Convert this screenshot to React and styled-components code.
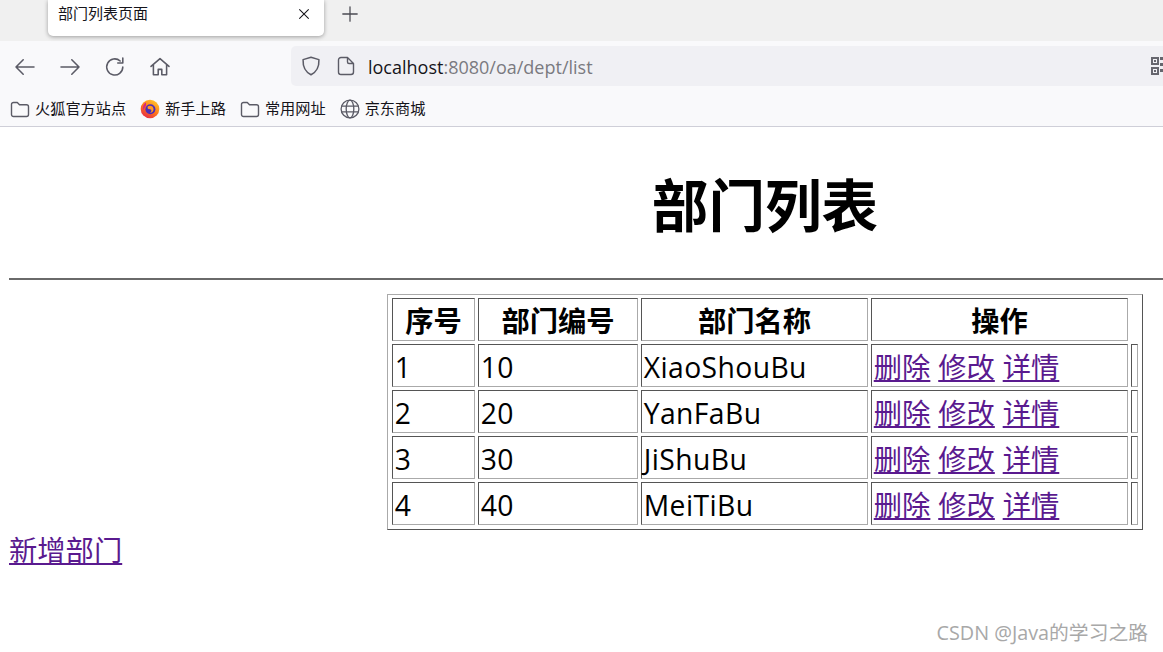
import React from "react";
import styled, { createGlobalStyle } from "styled-components";

const Global = createGlobalStyle`
  html, body { margin: 0; padding: 0; background: #fff; width: 1163px; height: 652px; overflow: hidden; }
  body { font-family: "Open Sans", "Noto Sans CJK SC", sans-serif; color: #000; }
`;
const Frame = styled.div`position: relative; width: 1163px; height: 652px; overflow: hidden;`;
const TabBar = styled.div`display: flex; align-items: flex-start; height: 41px; background: #f0f0f0; padding-left: 48px;`;
const Tab = styled.div`
  display: flex; align-items: center; justify-content: space-between; box-sizing: border-box;
  width: 276px; height: 36px; padding: 0 12px 9px 10px; background: #fff;
  border-radius: 0 0 5px 5px; box-shadow: 0 1px 4px rgba(0,0,0,.35);
  font-size: 15px; line-height: 27px; color: #15141a;
`;
const NewTab = styled.div`display: flex; margin: 5px 0 0 17px; color: #4a4a52;`;
const Toolbar = styled.div`display: flex; align-items: center; height: 50px; background: #f9f9fb; padding: 0 0 0 13px;`;
const NavIcons = styled.div`display: flex; gap: 21px; width: 278px; margin-top: 1px; color: #5b5b66;`;
const UrlBar = styled.div`
  flex: 1; display: flex; align-items: center; height: 40px; background: #f0f0f4; border-radius: 5px 0 0 5px;
  padding-left: 9px; color: #5b5b66; position: relative;
`;
const AddressGap = styled.span`width: 14px;`;
const Url = styled.div`font-size: 18px; line-height: 26px; margin: 2px 0 0 12px; color: #15141a; white-space: nowrap;`;
const UrlRest = styled.span`color: #7a7a80;`;
const QrIcon = styled.div`position: absolute; left: 860px; top: 11px; display: flex;`;
const Bookmarks = styled.div`
  display: flex; align-items: center; gap: 14px; height: 35px; padding-left: 10px; background: #f9f9fb;
  border-bottom: 1px solid #cfcfd8;
`;
const Bookmark = styled.div`display: flex; align-items: center; gap: 5px; font-size: 15.2px; color: #15141a; white-space: nowrap;`;
const BookmarkLabel = styled.span`padding-bottom: 3px;`;
const Page = styled.div`width: 1512px; margin-left: 9px; font-size: 28.3px; line-height: 38px;`;
const Heading = styled.h1`
  margin: 0; padding-top: 41px; height: 151px; box-sizing: border-box; text-align: center;
  font-size: 56.6px; line-height: 76px; font-weight: 700;
`;
const Rule = styled.hr`margin: 0 0 14px; height: 0; border: 0; border-top: 2px solid #6a6a6a;`;
const Table = styled.table`
  margin: 0 auto; width: 756px; box-sizing: border-box; table-layout: fixed; border-collapse: separate; border-spacing: 3px;
  padding: 0 1px 1px; border: 1px solid; border-color: #aaa #555 #555 #aaa;
`;
const Header = styled.th`
  box-sizing: border-box; height: 43px; padding: 3px 0 0; border: 1px solid; border-color: #555 #aaa #aaa #555;
  font-size: 28.3px; font-weight: 700; text-align: center;
`;
const Cell = styled.td`
  box-sizing: border-box; height: 43px; padding: 2px 1.75px 0; border: 1px solid; border-color: #555 #aaa #aaa #555;
  font-size: 28.3px; white-space: nowrap; letter-spacing: ${(p) => (p.$latin ? "0.4px" : "0")};
  word-spacing: 0.5px;
`;
const Link = styled.a`color: #5a1a8f; text-decoration: underline;`;
const AddLink = styled(Link)`display: block; width: fit-content; margin-top: 1px;`;
const Watermark = styled.div`position: absolute; right: 15px; top: 621px; font-size: 19.8px; line-height: 24px; color: #a8a8a8;`;

const Svg = ({ size = 20, children, sw = 1.6 }) => (
  <svg width={size} height={size} viewBox="0 0 20 20" fill="none" stroke="currentColor" strokeWidth={sw} strokeLinecap="round" strokeLinejoin="round">{children}</svg>
);
const Folder = () => (
  <Svg><path d="M1.5 5.5a2 2 0 0 1 2-2h3.8l2.2 2.3h7a2 2 0 0 1 2 2v7.7a2 2 0 0 1-2 2h-13a2 2 0 0 1-2-2z" stroke="#5b5b66" strokeWidth="1.4"/></Svg>
);
const Globe = () => (
  <Svg>
    <g stroke="#5b5b66" strokeWidth="1.3">
      <circle cx="10" cy="10" r="8.9"/><ellipse cx="10" cy="10" rx="3.8" ry="8.9"/><path d="M1.6 7.2h16.8M1.6 12.8h16.8"/>
    </g>
  </Svg>
);
const FirefoxLogo = () => (
  <svg width="20" height="20" viewBox="0 0 20 20">
    <defs>
      <linearGradient id="fx" x1="0.8" y1="0" x2="0.2" y2="1">
        <stop offset="0" stopColor="#ffcb2e"/><stop offset=".5" stopColor="#ff7a1a"/><stop offset="1" stopColor="#e5234a"/>
      </linearGradient>
    </defs>
    <circle cx="10" cy="10" r="9.3" fill="url(#fx)"/>
    <path d="M6 3.2C3.5 5 2.3 8.3 3.2 11.3L6 6.5z" fill="#d6247f"/>
    <circle cx="10.4" cy="10.2" r="5" fill="#4b2db8"/>
    <path d="M7.8 7.4c2-1.2 5-.5 5.6 1.8.6 2.4-1 4.6-3.4 4.6 1.4-.8 1.8-2.2 1-3.2-.6-.6-1.6-.4-2.6-.7-.9-.4-1-1.6-.6-2.5z" fill="#ff9a1f"/>
  </svg>
);

const rows = [
  ["1", "10", "XiaoShouBu"],
  ["2", "20", "YanFaBu"],
  ["3", "30", "JiShuBu"],
  ["4", "40", "MeiTiBu"],
];

export default function App() {
  return (
    <Frame>
      <Global />
      <TabBar>
        <Tab>
          <span>部门列表页面</span>
          <Svg size={16} sw={1.3}><path d="M4.5 4.5l11 11M15.5 4.5l-11 11" /></Svg>
        </Tab>
        <NewTab>
          <Svg size={18} sw={1.4}><path d="M10 2v16M2 10h16" /></Svg>
        </NewTab>
      </TabBar>
      <Toolbar>
        <NavIcons>
          <Svg size={24} sw={1.3}><path d="M17.5 10H2.5M8.5 4l-6 6 6 6" /></Svg>
          <Svg size={24} sw={1.3}><path d="M2.5 10h15M11.5 4l6 6-6 6" /></Svg>
          <Svg size={24} sw={1.3}><path d="M16.5 10a6.7 6.7 0 1 1-2.2-5M16.5 2.5v4.2h-4.2" /></Svg>
          <Svg size={24} sw={1.3}><path d="M2.5 9.5L10 3l7.5 6.5M4.5 8v8.5h4v-4.5h3v4.5h4V8" /></Svg>
        </NavIcons>
        <UrlBar>
          <Svg size={22} sw={1.4}><path d="M10 2l7.2 2.2c.3 6.4-1.8 11-7.2 13.8C4.6 15.2 2.5 10.6 2.8 4.2z" /></Svg>
          <AddressGap />
          <Svg size={20} sw={1.4}><path d="M5 1.5h6.5l6 6V16a2.5 2.5 0 0 1-2.5 2.5H5A2.5 2.5 0 0 1 2.5 16V4A2.5 2.5 0 0 1 5 1.5zM11.5 1.5V6a1.5 1.5 0 0 0 1.5 1.5h4.5" /></Svg>
          <Url>localhost<UrlRest>:8080/oa/dept/list</UrlRest></Url>
          <QrIcon>
            <svg width="18" height="18" viewBox="0 0 18 18" fill="#66666e">
              <path fillRule="evenodd" d="M0 0h8v8H0zM2 2v4h4V2zM0 10h8v8H0zM2 12v4h4v-4zM3 3h2v2H3zM3 13h2v2H3zM9 0h3v3H9zM13 3h4v3h-4zM9 6h3v3H9zM13 9h4v3h-4zM9 12h3v3H9zM13 15h4v3h-4z" />
            </svg>
          </QrIcon>
        </UrlBar>
      </Toolbar>
      <Bookmarks>
        <Bookmark><Folder /><BookmarkLabel>火狐官方站点</BookmarkLabel></Bookmark>
        <Bookmark><FirefoxLogo /><BookmarkLabel>新手上路</BookmarkLabel></Bookmark>
        <Bookmark><Folder /><BookmarkLabel>常用网址</BookmarkLabel></Bookmark>
        <Bookmark><Globe /><BookmarkLabel>京东商城</BookmarkLabel></Bookmark>
      </Bookmarks>
      <Page>
        <Heading>部门列表</Heading>
        <Rule />
        <Table>
          <colgroup>
            <col style={{ width: 83 }} /><col style={{ width: 160 }} /><col style={{ width: 227 }} /><col style={{ width: 257 }} /><col style={{ width: 7 }} />
          </colgroup>
          <thead>
            <tr>
              <Header>序号</Header><Header>部门编号</Header><Header>部门名称</Header><Header>操作</Header>
            </tr>
          </thead>
          <tbody>
            {rows.map((r) => (
              <tr key={r[0]}>
                {r.map((c) => <Cell key={c} $latin>{c}</Cell>)}
                <Cell><Link href="#">删除</Link> <Link href="#">修改</Link> <Link href="#">详情</Link></Cell>
                <Cell />
              </tr>
            ))}
          </tbody>
        </Table>
        <AddLink href="#">新增部门</AddLink>
      </Page>
      <Watermark>CSDN @Java的学习之路</Watermark>
    </Frame>
  );
}
